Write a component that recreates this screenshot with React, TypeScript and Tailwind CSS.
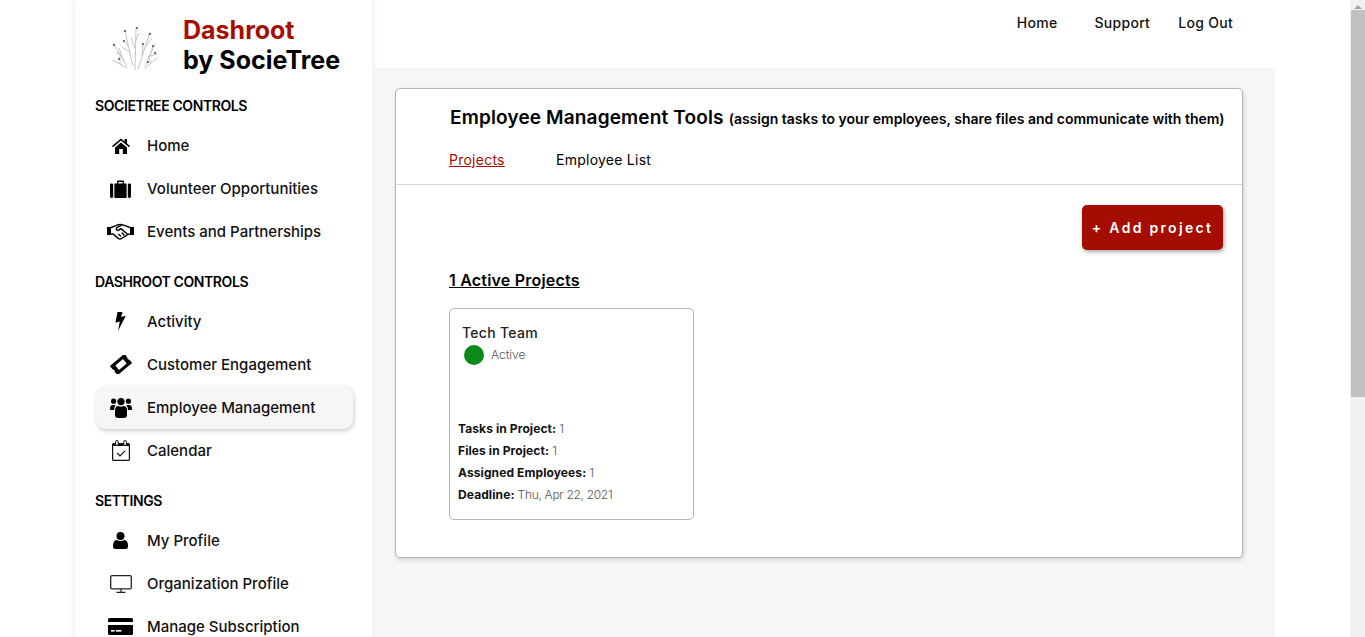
import React from 'react';

function Logo() {
  // thin grey branches of the SocieTree mark
  const branches = [
    'M135 70 L136 28', 'M135 48 L131 38', 'M135 42 L139 33',
    'M133 66 L125 31', 'M128 46 L124 41', 'M130 52 L122 47',
    'M138 69 L150 32', 'M142 56 L143 44', 'M146 46 L152 38',
    'M127 66 L113 43', 'M121 56 L116 52', 'M124 62 L119 48',
    'M127 68 L113 60', 'M120 64 L120 56',
    'M145 66 L155 44', 'M150 56 L157 54', 'M149 58 L153 46',
    'M145 68 L158 57', 'M151 63 L148 56',
  ];
  const dots = [[125, 31], [124, 41], [137, 28], [150, 34], [143, 44], [114, 45], [119, 59], [153, 46], [155, 53], [148, 62]];
  return (
    <svg width="70" height="60" viewBox="100 15 70 60" className="shrink-0">
      {branches.map((d, i) => <path key={i} d={d} stroke="#c4c4c4" strokeWidth="1" fill="none" />)}
      {dots.map(([x, y], i) => <circle key={i} cx={x} cy={y} r="1.1" fill="#555" />)}
    </svg>
  );
}

const HomeIcon = (
  <svg width="18" height="16" viewBox="0 0 18 16">
    <path d="M0 8 L9 .5 L12.5 3.4 V1 H15 V5.5 L18 8 L17 9.2 L9 2.6 L1 9.2 Z" fill="#000" />
    <path d="M3 9.4 L9 4.4 L15 9.4 V16 H10.8 V11 H7.2 V16 H3 Z" fill="#000" />
  </svg>
);

const SuitcaseIcon = (
  <svg width="21" height="18" viewBox="0 0 21 18">
    <path d="M7 4 V1.5 Q7 .5 8 .5 H13 Q14 .5 14 1.5 V4 H12.6 V2 H8.4 V4 Z" fill="#000" />
    <rect x="0" y="3.5" width="3.2" height="14.5" rx="1.4" fill="#000" />
    <rect x="4.4" y="3.5" width="12.2" height="14.5" fill="#000" />
    <rect x="17.8" y="3.5" width="3.2" height="14.5" rx="1.4" fill="#000" />
  </svg>
);

const HandshakeIcon = (
  <svg width="27" height="17" viewBox="0 0 27 17" fill="none">
    <rect x="0" y="4" width="4" height="8" fill="#000" />
    <rect x="23" y="4" width="4" height="8" fill="#000" />
    <path d="M4 4.5 L9 2.6 Q13 .8 16 2 L18 2.6 L23 4.5 M4 11 L6 11 L11.5 15.6 Q13.5 16.6 15.5 15 L21 11.4 L23 11" stroke="#000" strokeWidth="1.4" />
    <path d="M14.5 2.2 L9.5 5 Q8.6 7 11 7.4 L14 5.6 L20.6 11.2 M11.5 11 L14 13.4 M14.8 9.6 L17.4 12.4" stroke="#000" strokeWidth="1.4" />
  </svg>
);

const BoltIcon = (
  <svg width="11" height="19" viewBox="0 0 11 19">
    <path d="M2.5 0 H7.5 L6.2 5 L10.8 3.8 L3 19 L4.8 9.6 L.4 10.8 Z" fill="#000" />
  </svg>
);

const TicketIcon = (
  <svg width="22" height="19" viewBox="0 0 22 19">
    <g transform="rotate(-40 11 9.5)">
      <path d="M1.5 3.5 H20.5 V7 Q19 9.5 20.5 12 V15.5 H1.5 V12 Q3 9.5 1.5 7 Z" fill="#000" />
      <rect x="6" y="6.6" width="10" height="5.8" fill="#fff" />
    </g>
  </svg>
);

const UsersIcon = (
  <svg width="22" height="20" viewBox="0 0 22 20">
    <circle cx="3.6" cy="3.2" r="2.6" fill="#000" />
    <circle cx="18.4" cy="3.2" r="2.6" fill="#000" />
    <circle cx="11" cy="3.6" r="3.6" fill="#000" />
    <path d="M0 11 Q0 7 3 7 H5.6 Q4 9 4 12 H1 Q0 12 0 11 Z" fill="#000" />
    <path d="M22 11 Q22 7 19 7 H16.4 Q18 9 18 12 H21 Q22 12 22 11 Z" fill="#000" />
    <path d="M5 17 V12.5 Q5 8 8.5 8 Q11 9.6 13.5 8 Q17 8 17 12.5 V17 Q17 20 14 20 H8 Q5 20 5 17 Z" fill="#000" />
  </svg>
);

const CalendarIcon = (
  <svg width="18" height="21" viewBox="0 0 18 21" fill="none">
    <rect x=".6" y="3.6" width="16.8" height="16.8" rx="1" stroke="#111" strokeWidth="1.2" />
    <path d="M1 4 H17 V6 H1 Z" fill="#111" />
    <rect x="3.6" y=".5" width="2.6" height="5" rx="1.3" fill="#fff" stroke="#111" strokeWidth="1" />
    <rect x="11.8" y=".5" width="2.6" height="5" rx="1.3" fill="#fff" stroke="#111" strokeWidth="1" />
    <path d="M5.2 13 L8 15.8 L13 10.8" stroke="#111" strokeWidth="1.2" />
  </svg>
);

const UserIcon = (
  <svg width="15" height="17" viewBox="0 0 15 17">
    <circle cx="7.5" cy="4" r="4" fill="#000" />
    <path d="M0 14 Q0 8.6 3.6 8 Q7.5 10 11.4 8 Q15 8.6 15 14 Q15 17 13 17 H2 Q0 17 0 14 Z" fill="#000" />
  </svg>
);

const MonitorIcon = (
  <svg width="22" height="18" viewBox="0 0 22 18" fill="none">
    <rect x=".7" y=".7" width="20.6" height="13.2" rx="1.4" stroke="#222" strokeWidth="1.3" />
    <path d="M11 14 V17 M6.5 17.3 H15.5" stroke="#222" strokeWidth="1.2" />
  </svg>
);

const CardIcon = (
  <svg width="25" height="17" viewBox="0 0 25 17">
    <path d="M0 4 V1.5 Q0 0 1.5 0 H23.5 Q25 0 25 1.5 V4 Z" fill="#000" />
    <path d="M0 7 H25 V15.5 Q25 17 23.5 17 H1.5 Q0 17 0 15.5 Z" fill="#000" />
    <rect x="3" y="12" width="3.6" height="1.6" fill="#fff" />
    <rect x="8" y="12" width="5.4" height="1.6" fill="#fff" />
  </svg>
);

function NavItem({ icon, label, active }: { icon: React.ReactNode; label: string; active?: boolean }) {
  return (
    <div className={`ml-px flex h-[43px] w-[257px] items-center rounded-[10px] ${active ? 'bg-[#f6f6f6] shadow-[1px_2px_5px_rgba(0,0,0,0.2)]' : ''}`}>
      <div className="mr-[2px] flex w-[49px] justify-center text-black">{icon}</div>
      <span className="pt-px text-[15px] font-medium text-[#111]">{label}</span>
    </div>
  );
}

function SectionTitle({ children, className }: { children: React.ReactNode; className?: string }) {
  return <div className={`h-6 text-[14px] leading-6 font-semibold tracking-[-0.4px] text-black ${className}`}>{children}</div>;
}

function Stat({ label, value }: { label: string; value: string }) {
  return (
    <div className="h-[22px] text-[12px] leading-[22px] font-light tracking-[-0.3px] text-[#555]">
      <span className="font-bold tracking-[0.1px] text-[#111]">{label}</span> {value}
    </div>
  );
}

export default function App() {
  return (
    <div className="flex h-screen overflow-hidden bg-white font-[Inter,sans-serif]">
      <div className="flex min-w-0 flex-1 px-[75px]">
        <aside className="w-[297px] shrink-0 pt-[15px] shadow-[0_0_8px_rgba(0,0,0,0.1)]">
          <div className="flex h-[60px] pl-[25px]">
            <Logo />
            <div className="ml-[13px] text-[25px] leading-[30px] font-bold whitespace-nowrap">
              <div className="text-[#a50d00]">Dashroot</div>
              <div className="text-black">by SocieTree</div>
            </div>
          </div>
          <div className="pl-5">
            <SectionTitle className="mt-[19px] mb-[6px]">SOCIETREE CONTROLS</SectionTitle>
            <NavItem icon={HomeIcon} label="Home" />
            <NavItem icon={SuitcaseIcon} label="Volunteer Opportunities" />
            <NavItem icon={HandshakeIcon} label="Events and Partnerships" />
            <SectionTitle className="mt-[17px] mb-[6px]">DASHROOT CONTROLS</SectionTitle>
            <NavItem icon={BoltIcon} label="Activity" />
            <NavItem icon={TicketIcon} label="Customer Engagement" />
            <NavItem active icon={UsersIcon} label="Employee Management" />
            <NavItem icon={CalendarIcon} label="Calendar" />
            <SectionTitle className="mt-[17px] mb-[6px]">SETTINGS</SectionTitle>
            <NavItem icon={UserIcon} label="My Profile" />
            <NavItem icon={MonitorIcon} label="Organization Profile" />
            <NavItem icon={CardIcon} label="Manage Subscription" />
          </div>
        </aside>

        <div className="flex min-w-0 flex-1 flex-col">
          <header className="flex h-[68px] shrink-0 justify-end pt-[13px] pr-[42px] text-[14px] leading-5 font-medium tracking-[0.3px] text-[#111]">
            <span className="mr-[37px]">Home</span>
            <span className="mr-[28px]">Support</span>
            <span>Log Out</span>
          </header>
          <main className="flex-1 bg-[#f6f6f6] pt-5 pr-8 pl-[23px]">
            <div className="h-[470px] rounded-[5px] border border-[#b5b5b5] bg-white shadow-[1px_2px_4px_rgba(0,0,0,0.15)]">
              <div className="h-[96px] border-b border-[#d6d6d6] pl-[53px]">
                <div className="flex h-[61px] items-baseline pt-[15px] pl-px whitespace-nowrap">
                  <span className="text-[19px] font-semibold tracking-[0.15px] text-black">Employee Management Tools</span>
                  <span className="ml-[5px] text-[14px] font-semibold text-black">(assign tasks to your employees, share files and communicate with them)</span>
                </div>
                <div className="flex text-[14px] leading-5 tracking-[0.25px]">
                  <span className="w-[107px] text-[#a50d00] underline">Projects</span>
                  <span className="text-black">Employee List</span>
                </div>
              </div>
              <div className="pt-5 pr-[19px] pl-[53px]">
                <div className="flex justify-end">
                  <button className="h-[45px] w-[141px] rounded-[5px] bg-[#a50d00] text-[14px] font-semibold tracking-[2.3px] text-white shadow-[1px_2px_4px_rgba(0,0,0,0.35)]">+ Add project</button>
                </div>
                <div className="mt-[18px] h-6 text-[16px] leading-6 font-semibold tracking-[0.2px] text-black underline">1 Active Projects</div>
                <div className="mt-[16px] h-[212px] w-[245px] rounded-[5px] border border-[#b5b5b5] pt-[14px] pl-2">
                  <div className="pl-1 text-[14px] leading-5 font-medium tracking-[0.3px] text-[#222]">Tech Team</div>
                  <div className="mt-[2px] flex items-center pl-[6px]">
                    <span className="h-5 w-5 rounded-full bg-[#0b8a1a]" />
                    <span className="ml-[7px] text-[12px] font-light text-[#555]">Active</span>
                  </div>
                  <div className="mt-[53px]">
                    <Stat label="Tasks in Project:" value="1" />
                    <Stat label="Files in Project:" value="1" />
                    <Stat label="Assigned Employees:" value="1" />
                    <Stat label="Deadline:" value="Thu, Apr 22, 2021" />
                  </div>
                </div>
              </div>
            </div>
          </main>
        </div>
      </div>

      <div className="w-[15px] shrink-0 bg-[#f1f1f1]">
        <div className="mx-auto mt-[5px] h-0 w-0 border-x-[4px] border-b-[4px] border-x-transparent border-b-[#a3a3a3]" />
        <div className="mt-[1px] ml-px h-[387px] w-[14px] bg-[#c1c1c1]" />
      </div>
    </div>
  );
}
